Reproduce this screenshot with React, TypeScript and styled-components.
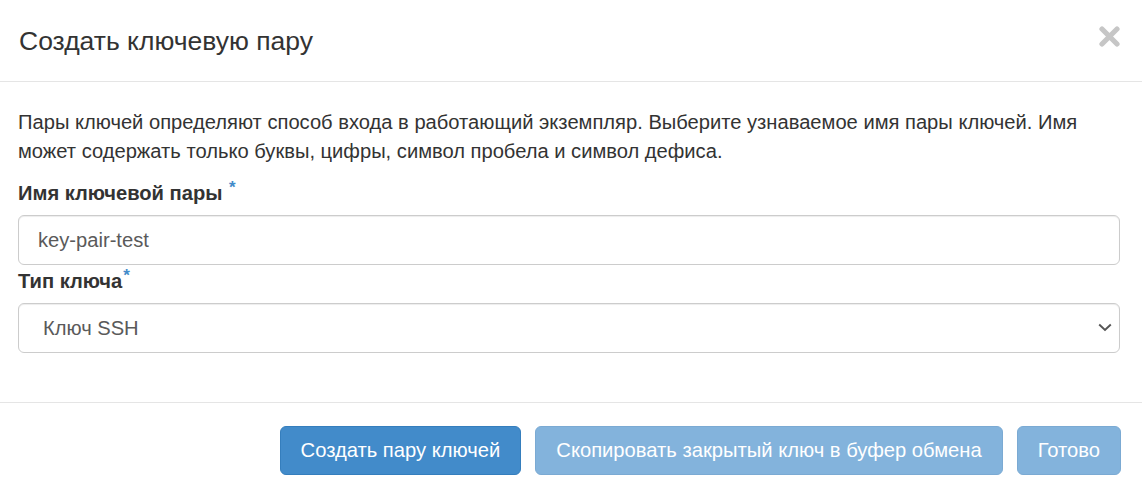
import React from "react";
import styled, { createGlobalStyle } from "styled-components";

const Global = createGlobalStyle`
  html, body { margin: 0; padding: 0; background: #fff; }
  body {
    font-family: "Liberation Sans", Arial, Helvetica, sans-serif;
    color: #333;
    -webkit-font-smoothing: antialiased;
  }
  * { box-sizing: border-box; }
`;

const Modal = styled.div`
  width: 1142px;
  height: 495px;
  display: flex;
  flex-direction: column;
  background: #fff;
`;

const Header = styled.div`
  height: 82px;
  padding: 0 22px 0 19px;
  border-bottom: 1px solid #e5e5e5;
  display: flex;
  align-items: center;
  justify-content: space-between;
`;

const Title = styled.h4`
  margin: 0;
  font-size: 26.5px;
  font-weight: normal;
  line-height: 38px;
  color: #333;
`;

const Close = styled.button`
  border: 0;
  background: transparent;
  padding: 0;
  margin-top: -8px;
  width: 21px;
  height: 21px;
  display: flex;
  align-items: center;
  justify-content: center;
  cursor: pointer;
`;

const Body = styled.div`
  flex: 1;
  padding: 26px 22px 0 18px;
`;

const Description = styled.p`
  margin: 0 0 13px;
  font-size: 20.15px;
  line-height: 29px;
  color: #333;
`;

const Label = styled.label<{ $gapTop?: number }>`
  display: block;
  font-weight: bold;
  font-size: 20.15px;
  line-height: 28px;
  margin: ${(p) => p.$gapTop ?? 0}px 0 8px;
  color: #333;
`;

const Required = styled.span`
  color: #428bca;
  font-size: 17px;
  font-weight: bold;
  vertical-align: top;
  position: relative;
  top: -5px;
  margin-left: 1px;
`;

const TextInput = styled.input`
  display: block;
  width: 100%;
  height: 50px;
  padding: 0 19px;
  border: 1px solid #ccc;
  border-radius: 6px;
  font-family: "Liberation Sans", Arial, sans-serif;
  font-size: 20.15px;
  color: #5a5a5a;
  background: #fff;
  box-shadow: inset 0 1px 1px rgba(0, 0, 0, 0.075);
  outline: none;
`;

const SelectWrap = styled.div`
  position: relative;
`;

const Select = styled.select`
  display: block;
  width: 100%;
  height: 50px;
  padding: 0 40px 0 24px;
  border: 1px solid #ccc;
  border-radius: 6px;
  font-family: "Liberation Sans", Arial, sans-serif;
  font-size: 20.15px;
  color: #5a5a5a;
  background: #fff;
  appearance: none;
  -webkit-appearance: none;
  box-shadow: inset 0 1px 1px rgba(0, 0, 0, 0.075);
  outline: none;
`;

const Chevron = styled.svg`
  position: absolute;
  right: 8px;
  top: 20px;
  pointer-events: none;
`;

const Footer = styled.div`
  height: 93px;
  border-top: 1px solid #e5e5e5;
  padding: 23px 21px 0 0;
  display: flex;
  justify-content: flex-end;
  align-items: flex-start;
  gap: 14px;
`;

const Button = styled.button<{ $disabled?: boolean }>`
  height: 49px;
  padding: 0 20px;
  border: 1px solid #357ebd;
  border-radius: 6px;
  background: #428bca;
  color: #fff;
  font-family: "Liberation Sans", Arial, sans-serif;
  font-size: 20.2px;
  line-height: 47px;
  white-space: nowrap;
  cursor: ${(p) => (p.$disabled ? "not-allowed" : "pointer")};
  opacity: ${(p) => (p.$disabled ? 0.65 : 1)};
`;

export default function App() {
  return (
    <>
      <Global />
      <Modal>
        <Header>
          <Title>Создать ключевую пару</Title>
          <Close aria-label="Закрыть">
            <svg width="21" height="21" viewBox="0 0 21 21">
              <path
                d="M3 3 L18 18 M18 3 L3 18"
                stroke="#c6c6c6"
                strokeWidth="5.2"
                strokeLinecap="round"
              />
            </svg>
          </Close>
        </Header>
        <Body>
          <Description>
            Пары ключей определяют способ входа в работающий экземпляр. Выберите
            узнаваемое имя пары ключей. Имя может содержать только буквы, цифры,
            символ пробела и символ дефиса.
          </Description>
          <Label htmlFor="kp-name">
            Имя ключевой пары <Required>*</Required>
          </Label>
          <TextInput id="kp-name" defaultValue="key-pair-test" />
          <Label htmlFor="kp-type" $gapTop={2}>
            Тип ключа<Required>*</Required>
          </Label>
          <SelectWrap>
            <Select id="kp-type" defaultValue="ssh">
              <option value="ssh">Ключ SSH</option>
              <option value="x509">Сертификат X509</option>
            </Select>
            <Chevron width="14" height="9" viewBox="0 0 14 9">
              <path
                d="M1.2 1.5 L7 7 L12.8 1.5"
                fill="none"
                stroke="#555"
                strokeWidth="1.9"
              />
            </Chevron>
          </SelectWrap>
        </Body>
        <Footer>
          <Button>Создать пару ключей</Button>
          <Button $disabled>Скопировать закрытый ключ в буфер обмена</Button>
          <Button $disabled>Готово</Button>
        </Footer>
      </Modal>
    </>
  );
}
